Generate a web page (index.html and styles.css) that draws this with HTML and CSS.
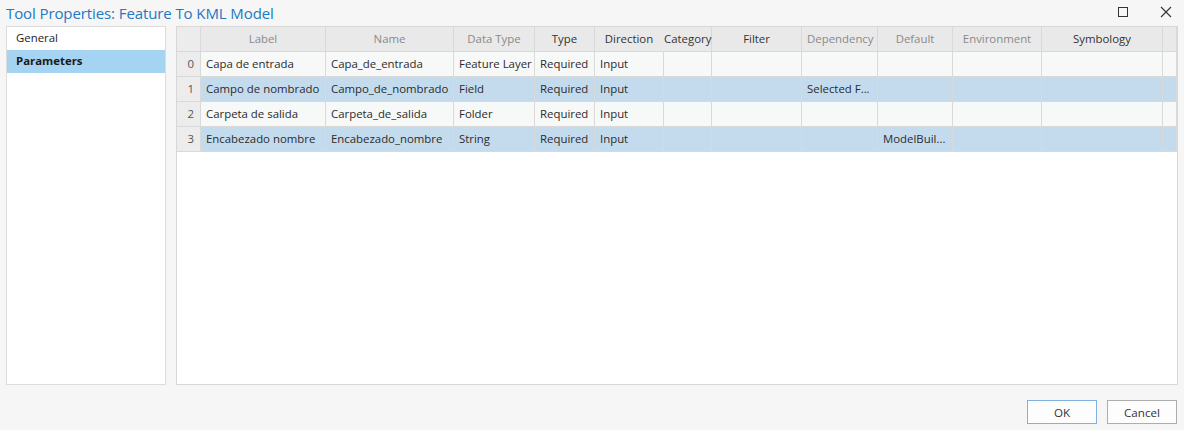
FILE: index.html
```html
<!DOCTYPE html>
<html>
<head>
<meta charset="utf-8">
<link rel="stylesheet" href="styles.css">
</head>
<body>
<div class="dialog">
  <div class="titlebar">
    <div class="title">Tool Properties: Feature To KML Model</div>
    <div class="winbtns">
      <svg class="winicon" width="12" height="12" viewBox="0 0 12 12"><rect x="1.5" y="1.5" width="9" height="9" fill="none" stroke="#333" stroke-width="1"/></svg>
      <svg class="winicon" width="12" height="12" viewBox="0 0 12 12"><path d="M1 1 L11 11 M11 1 L1 11" stroke="#333" stroke-width="1.1" fill="none"/></svg>
    </div>
  </div>
  <div class="main">
    <div class="nav">
      <div class="nav-item">General</div>
      <div class="nav-item active">Parameters</div>
    </div>
    <div class="grid-wrap">
      <table class="grid">
        <colgroup>
          <col style="width:24px"><col style="width:125px"><col style="width:128px"><col style="width:81px"><col style="width:60px"><col style="width:69px"><col style="width:48px"><col style="width:90px"><col style="width:76px"><col style="width:75px"><col style="width:89px"><col style="width:121px"><col style="width:14px">
        </colgroup>
        <thead>
          <tr>
            <th class="idx"></th>
            <th class="dim">Label</th>
            <th class="dim">Name</th>
            <th class="dim">Data Type</th>
            <th>Type</th>
            <th class="nosep">Direction</th>
            <th class="tight">Category</th>
            <th>Filter</th>
            <th class="dim">Dependency</th>
            <th class="dim">Default</th>
            <th class="dim">Environment</th>
            <th>Symbology</th>
            <th></th>
          </tr>
        </thead>
        <tbody>
          <tr>
            <td class="idx">0</td><td>Capa de entrada</td><td>Capa_de_entrada</td><td>Feature Layer</td><td>Required</td><td>Input</td><td></td><td></td><td></td><td></td><td></td><td></td><td></td>
          </tr>
          <tr class="sel">
            <td class="idx">1</td><td>Campo de nombrado</td><td>Campo_de_nombrado</td><td>Field</td><td>Required</td><td>Input</td><td></td><td></td><td>Selected F...</td><td></td><td></td><td></td><td></td>
          </tr>
          <tr>
            <td class="idx">2</td><td>Carpeta de salida</td><td>Carpeta_de_salida</td><td>Folder</td><td>Required</td><td>Input</td><td></td><td></td><td></td><td></td><td></td><td></td><td></td>
          </tr>
          <tr class="sel">
            <td class="idx">3</td><td>Encabezado nombre</td><td>Encabezado_nombre</td><td>String</td><td>Required</td><td>Input</td><td></td><td></td><td></td><td>ModelBuil...</td><td></td><td></td><td></td>
          </tr>
        </tbody>
      </table>
    </div>
  </div>
  <div class="footer">
    <button class="btn primary">OK</button>
    <button class="btn">Cancel</button>
  </div>
</div>
</body>
</html>
```

FILE: styles.css
```css
* { box-sizing: border-box; }
html, body {
  margin: 0;
  padding: 0;
  background: #f5f6f5;
  width: 1184px;
  height: 430px;
  overflow: hidden;
}
body {
  font-family: "Segoe UI", "Open Sans", "Noto Sans", sans-serif;
  font-size: 11.4px;
  color: #2b2b2b;
}
.dialog {
  display: flex;
  flex-direction: column;
  height: 430px;
}
.titlebar {
  height: 26px;
  display: flex;
  align-items: center;
  justify-content: space-between;
  padding: 0 12px 0 6px;
}
.title {
  font-size: 15px;
  color: #2378c3;
  letter-spacing: -0.1px;
  margin-top: -1px;
}
.winbtns {
  display: flex;
  gap: 31px;
  align-items: center;
  margin-top: -2px;
}
.winicon { display: block; }
.main {
  display: flex;
  gap: 10px;
  padding: 0 6px 0 6px;
  height: 359px;
}
.nav {
  width: 160px;
  background: #fff;
  border: 1px solid #dcdcdc;
  padding-top: 0;
}
.nav-item {
  height: 23px;
  line-height: 22px;
  padding-left: 9px;
  color: #222;
}
.nav-item.active {
  background: #a5d3f2;
  font-weight: bold;
  color: #1a1a1a;
}
.grid-wrap {
  flex: 1;
  background: #fff;
  border: 1px solid #d8d8d8;
}
.grid {
  border-collapse: collapse;
  table-layout: fixed;
  width: 1000px;
}
.grid th, .grid td {
  border-right: 1px solid #d9d9d9;
  border-bottom: 1px solid #d9d9d9;
  white-space: nowrap;
  overflow: hidden;
  padding: 0 5px;
}
.grid th {
  height: 24px;
  background: #e9e9e9;
  font-weight: normal;
  text-align: center;
  color: #333;
}
.grid th.dim { color: #8a8a8a; }
.grid th.nosep { border-right-color: #e9e9e9; }
.grid th.tight { padding: 0; overflow: visible; }
.grid td {
  height: 25px;
  background: #f7f8f8;
  color: #2b2b2b;
}
.grid td.idx, .grid th.idx {
  background: #ececec;
  text-align: right;
  color: #555;
  padding-right: 6px;
}
.grid tr.sel td:not(.idx) { background: #c4dbee; }
.footer {
  display: flex;
  justify-content: flex-end;
  gap: 10px;
  padding: 15px 7px 0 0;
}
.btn {
  width: 70px;
  height: 24px;
  background: #fdfdfd;
  border: 1px solid #adadad;
  font-family: inherit;
  font-size: 11.6px;
  color: #333;
  padding: 0;
}
.btn.primary { border-color: #7fb2e0; }
```
